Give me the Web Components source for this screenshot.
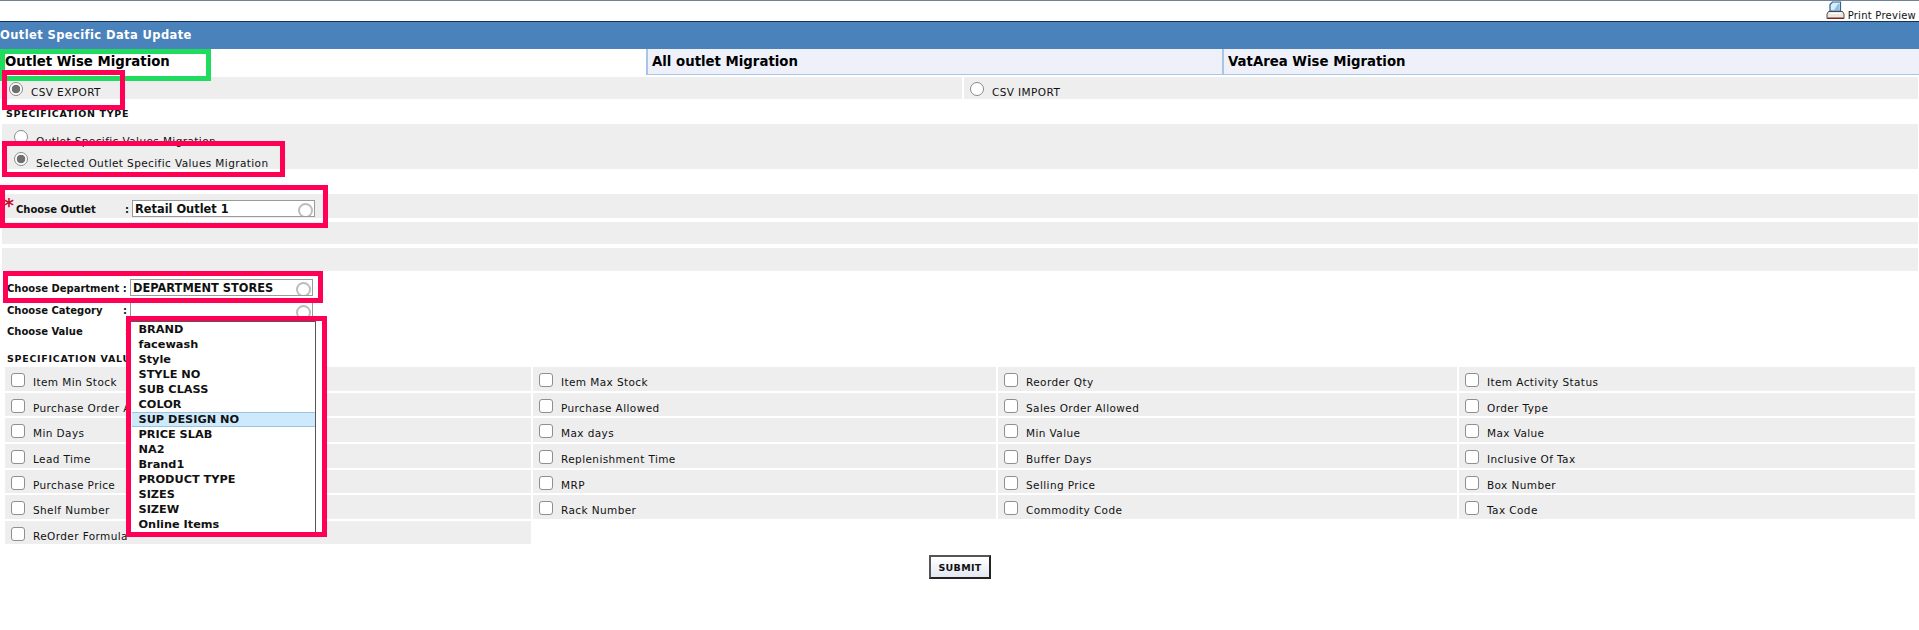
<!DOCTYPE html>
<html lang="en"><head><meta charset="utf-8"><title>Outlet Specific Data Update</title>
<style>
html,body{margin:0;padding:0;background:#fff}
body{font:10.5px "DejaVu Sans",Verdana,sans-serif;letter-spacing:.4px;color:#111;width:1919px;height:630px;overflow:hidden;position:relative}
</style></head><body>
<x-topbar></x-topbar>
<x-title>Outlet Specific Data Update</x-title>
<x-tabs></x-tabs>
<x-csv></x-csv>
<x-spec-type></x-spec-type>
<x-outlet></x-outlet>
<x-dept></x-dept>
<x-values></x-values>
<x-submit></x-submit>
<x-mark style="left:0;top:49px;width:211px;height:32px;--c:#1fdc5f"></x-mark>
<x-mark style="left:2px;top:70px;width:123px;height:40px"></x-mark>
<x-mark style="left:2px;top:141px;width:283px;height:36px"></x-mark>
<x-mark style="left:0;top:185px;width:328px;height:43px"></x-mark>
<x-mark style="left:3px;top:271px;width:320px;height:32px"></x-mark>
<x-listbox></x-listbox>
<script>
function el(tag,css,html){
  customElements.define(tag,class extends HTMLElement{
    constructor(){super();this.attachShadow({mode:'open'}).innerHTML='<style>'+css+'</style>'+html;}
  });
}
const radioCss=`.r{appearance:none;margin:0;width:14px;height:14px;border:1.5px solid #8a8a8a;border-radius:50%;background:#fff;box-sizing:border-box;flex:none;display:block}
.r.on{background:radial-gradient(circle,#6f6f6f 0 4px,#fff 4.6px);}`;
el('x-topbar',`:host{display:flex;justify-content:flex-end;align-items:flex-start;box-sizing:border-box;height:21px;border-top:1px solid #6f8296;padding-right:3px;gap:3px}
svg{display:block;margin-top:0}span{font-size:10px;letter-spacing:.25px;line-height:12px;margin-top:9px;color:#111}`,
`<svg width="19" height="19" viewBox="0 0 19 19"><path d="M4 10V3.5L6.5 1H14.5V10Z" fill="#d8ecfa" stroke="#34648f" stroke-width="1.2"/><path d="M8 9l4-6h1.5v6z" fill="#8cc0e6"/><path d="M2.5 10.5H16.5L18 13V17.5H1V13Z" fill="#eee8dc" stroke="#4a4a52" stroke-width="1"/><path d="M1.5 16.5H17.5V18H1.5Z" fill="#7c2a22"/><path d="M4 12.5H15" stroke="#fff" stroke-width="1"/></svg><span>Print Preview</span>`);
el('x-title',`:host{display:block;box-sizing:border-box;height:28px;border-top:1px solid #12345a;background:#4a83bc;color:#fff;font-weight:bold;font-size:11.5px;letter-spacing:.4px;line-height:27px;white-space:nowrap}`,`<slot></slot>`);
el('x-tabs',`:host{display:grid;grid-template-columns:646px 576px 1fr;height:26px;font-weight:bold;font-size:13.3px;letter-spacing:0;line-height:25px;color:#000}
div{padding-left:5px;box-sizing:border-box;white-space:nowrap}
.i{background:#eef1fa;border-left:2px solid #a9c4e4;border-bottom:1.5px solid #a9c4e4;padding-left:4px}`,
`<div>Outlet Wise Migration</div><div class="i">All outlet Migration</div><div class="i">VatArea Wise Migration</div>`);
el('x-csv',radioCss+`:host{display:grid;grid-template-columns:962px 1fr;column-gap:2px;height:22px;margin:2px 1px 0 0}
div{background:#eee;display:flex;align-items:flex-start;gap:8px;padding-left:9px;box-sizing:border-box}
.r{margin-top:5px}span{margin-top:9px;line-height:12px}`,
`<div><input class="r on" type="radio" name="c" checked><span>CSV EXPORT</span></div><div style="padding-left:6px"><input class="r" type="radio" name="c"><span>CSV IMPORT</span></div>`);
el('x-spec-type',radioCss+`:host{display:block;margin:0 1px 0 2px}
h4{margin:0;height:25px;box-sizing:border-box;padding:9px 0 0 4px;font-size:9.5px;letter-spacing:.7px;line-height:12px;font-weight:bold}
.b{background:#eee;height:45px;box-sizing:border-box;padding-left:12px;overflow:hidden}
.l{display:flex;gap:8px;height:22px;align-items:flex-start}
.r{margin-top:6px}span{margin-top:11px;line-height:12px}`,
`<h4>SPECIFICATION TYPE</h4><div class="b"><div class="l"><input class="r" type="radio" name="s"><span>Outlet Specific Values Migration</span></div><div class="l" style="height:23px"><input class="r on" type="radio" name="s" checked><span>Selected Outlet Specific Values Migration</span></div></div>`);
el('x-outlet',`:host{display:grid;row-gap:4px;margin:25px 1px 0 2px}
div{background:#eee;height:22px}.a{height:24px;position:relative;display:flex;align-items:flex-start}
b{font-size:10px;line-height:12px;margin:10px 0 0 0;letter-spacing:0;white-space:nowrap}
i{color:#c8102e;font:bold 19px/19px "DejaVu Sans";position:absolute;left:2px;top:2px}
x-field{margin:6px 0 0 0}`,
`<div class="a"><i>*</i><b style="margin-left:14px;width:109px">Choose Outlet</b><b style="width:5px">:</b><x-field style="margin-left:2px">Retail Outlet 1</x-field></div><div></div><div style="height:23px"></div>`);
el('x-field',`:host{display:block;box-sizing:border-box;width:183px;height:17px;border:1px solid #9a9a9a;background:#fff;font-weight:bold;font-size:11.4px;letter-spacing:0;line-height:16px;padding-left:2px;position:relative;overflow:hidden;white-space:nowrap}
u{position:absolute;right:1px;top:2px;width:15px;height:15px;box-sizing:border-box;border:2.5px solid #bdbdbd;border-radius:50%}`,`<slot></slot><u></u>`);
el('x-dept',`:host{display:grid;grid-template-columns:123px 1fr;grid-template-rows:24px 21px 1fr;height:73px;margin:8px 0 0 7px;font-size:10px;letter-spacing:0}
b{display:block;line-height:12px;white-space:nowrap}`,
`<b style="margin-top:3.5px">Choose Department :</b><x-field>DEPARTMENT STORES</x-field>
<b style="margin-top:2px;display:flex"><span style="width:116px">Choose Category</span>:</b><x-field style="margin-top:-1px;height:22px"></x-field>
<b style="margin-top:2px;display:flex"><span style="width:118px">Choose Value</span>:</b><span></span>`);
el('x-values',`:host{display:block;margin:0 3px 0 5px}
h4{margin:0;height:15px;box-sizing:border-box;padding-top:1px;font-size:9.5px;letter-spacing:.7px;line-height:12px;padding-left:2px;font-weight:bold;white-space:nowrap}
.g{display:grid;grid-template-columns:526px 463px 459px 456px;grid-template-rows:24px 23px 24px 24px 23px 24px 23px;column-gap:2px;row-gap:2px}`,
`<h4>SPECIFICATION VALUES</h4><div class="g">`+['Item Min Stock','Item Max Stock','Reorder Qty','Item Activity Status','Purchase Order Allowed','Purchase Allowed','Sales Order Allowed','Order Type','Min Days','Max days','Min Value','Max Value','Lead Time','Replenishment Time','Buffer Days','Inclusive Of Tax','Purchase Price','MRP','Selling Price','Box Number','Shelf Number','Rack Number','Commodity Code','Tax Code','ReOrder Formula'].map(t=>`<x-check>${t}</x-check>`).join('')+`</div>`);
el('x-check',`:host{display:flex;gap:8px;background:#eee;align-items:flex-start;padding-left:6px;box-sizing:border-box;white-space:nowrap}
input{appearance:none;margin:5.5px 0 0;width:14px;height:14px;box-sizing:border-box;border:1.5px solid #8f8f8f;border-radius:3px;background:#fff;flex:none}
span{margin-top:9px;line-height:12px}`,`<input type="checkbox"><span><slot></slot></span>`);
el('x-submit',`:host{display:flex;justify-content:center;margin:11px 0 0 1px}
button{box-sizing:border-box;width:62px;height:24px;border:2px solid #333;border-color:#555 #222 #222 #555;background:linear-gradient(#fff,#e2e7f2);font:bold 9.5px "DejaVu Sans";letter-spacing:.3px;padding:0;color:#111}`,`<button type="button">SUBMIT</button>`);
el('x-mark',`:host{display:block;position:absolute;box-sizing:border-box;border:5px solid var(--c,#ff0055);pointer-events:none}`,``);
el('x-listbox',`:host{display:block;position:absolute;left:126px;top:316px;width:201px;height:221px;box-sizing:border-box;border:5px solid #ff0055;background:#fff;font-weight:bold;font-size:11.3px;letter-spacing:0}
ul{list-style:none;margin:0;padding:0 0 0 1px;width:185px;height:211px;box-sizing:border-box;border-top:1px solid #555;border-right:1px solid #555;overflow:hidden}
li{height:15px;line-height:15px;padding-left:6.5px;box-sizing:border-box;white-space:nowrap}
li.h{background:#cdeafc;box-shadow:inset 0 1px #9cc4dc,inset 0 -1px #9cc4dc}`,
`<ul>`+['BRAND','facewash','Style','STYLE NO','SUB CLASS','COLOR','SUP DESIGN NO','PRICE SLAB','NA2','Brand1','PRODUCT TYPE','SIZES','SIZEW','Online Items'].map(t=>`<li${t==='SUP DESIGN NO'?' class="h"':''}>${t}</li>`).join('')+`</ul>`);
</script>
</body></html>
